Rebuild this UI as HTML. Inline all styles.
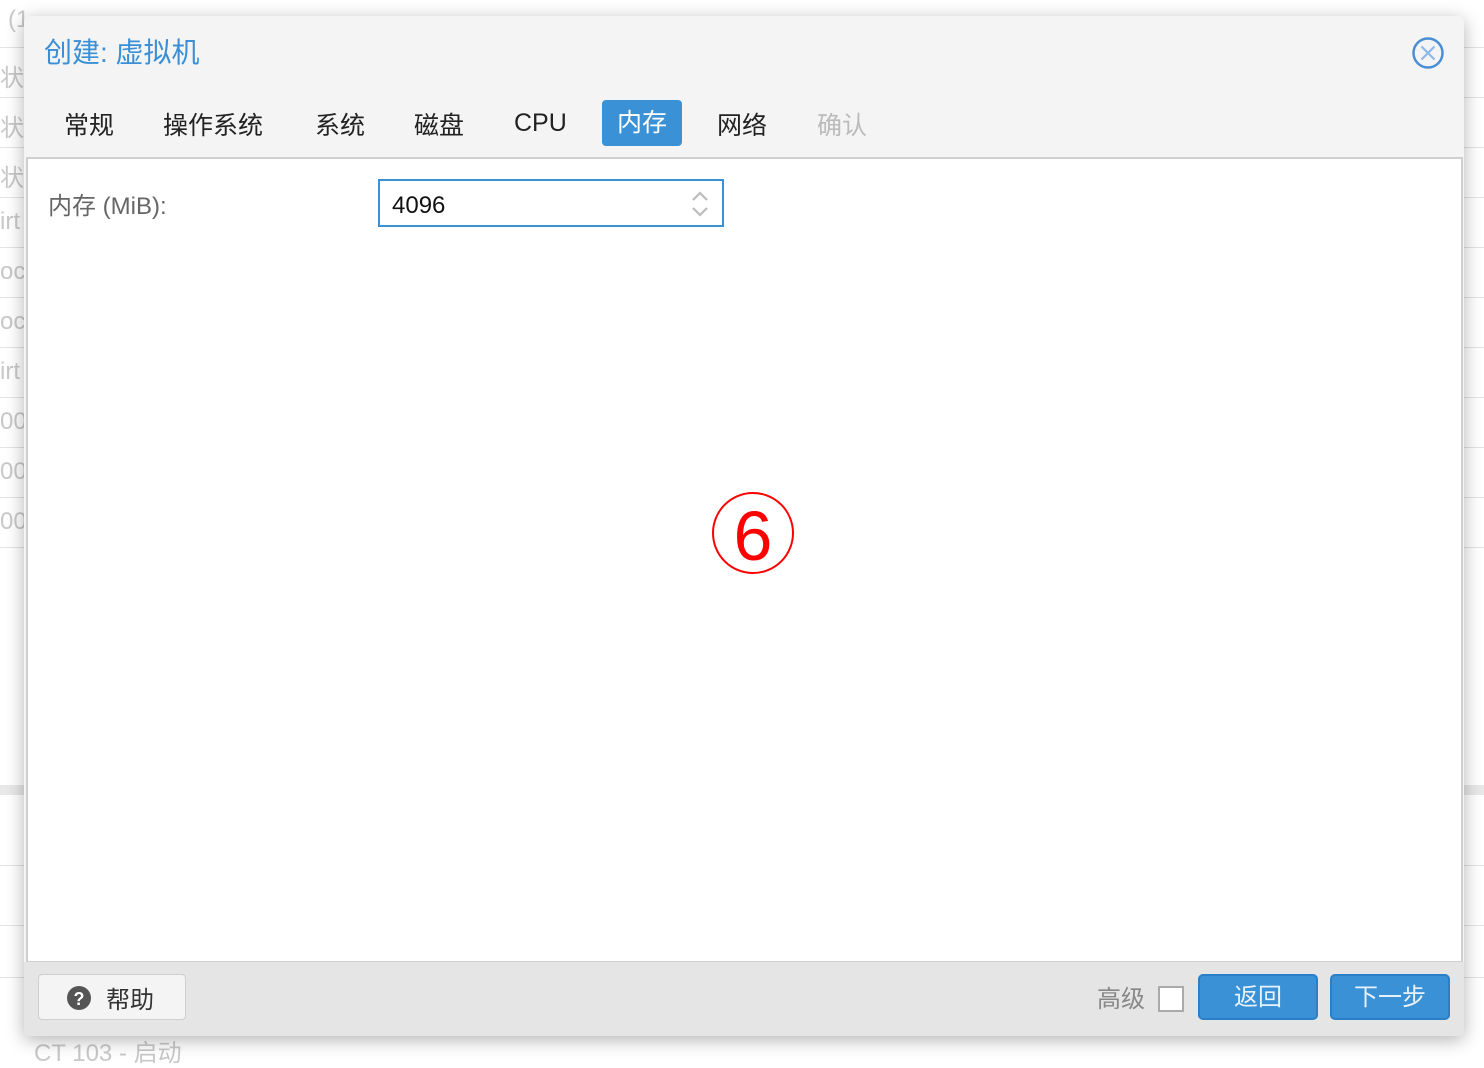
<!DOCTYPE html>
<html><head><meta charset="utf-8"><style>
body{margin:0;width:1484px;height:1058px;background:#fff;position:relative;overflow:hidden;font-family:"Liberation Sans","Noto Sans CJK SC",sans-serif;}
.bgl{position:absolute;left:0;width:1484px;height:1px;background:#e3e3e3}
.bgt{position:absolute;left:0;color:#c8c8c8;font-size:24px}
.dlg{position:absolute;left:24px;top:16px;width:1440px;height:1020px;background:#f4f4f4;border-radius:6px;box-shadow:0 4px 18px rgba(0,0,0,.3);overflow:hidden}
.title{position:absolute;left:20px;top:15px;font-size:28px;color:#3a8fd6}
.tab{position:absolute;top:90px;font-size:25px;color:#222}
.body{position:absolute;left:2px;top:141px;width:1433px;height:802px;background:#fff;border:2px solid #cfcfcf}
.foot{position:absolute;left:0;top:946px;width:1440px;height:74px;background:#e5e5e5}
.btn{position:absolute;top:12px;height:46px;border-radius:5px;background:#3a91d5;border:2px solid #2a80c8;box-sizing:border-box;color:#e8f2fb;font-size:24px;text-align:center;line-height:44px}
</style></head><body>
<div class="bgl" style="top:47px"></div><div class="bgl" style="top:97px"></div><div class="bgl" style="top:147px"></div><div class="bgl" style="top:197px"></div><div class="bgl" style="top:247px"></div><div class="bgl" style="top:297px"></div><div class="bgl" style="top:347px"></div><div class="bgl" style="top:397px"></div><div class="bgl" style="top:447px"></div><div class="bgl" style="top:497px"></div><div class="bgl" style="top:547px"></div>
<div style="position:absolute;left:0;top:785px;width:1484px;height:10px;background:#e8e8e8"></div>
<div class="bgl" style="top:865px"></div><div class="bgl" style="top:925px"></div><div class="bgl" style="top:977px"></div>
<div class="bgt" style="top:1033px;left:34px">CT 103 - 启动</div>
<div class="bgt" style="top:6px;left:8px">(1</div>
<div class="bgt" style="top:58px;left:0">状</div><div class="bgt" style="top:108px;left:0">状</div><div class="bgt" style="top:158px;left:0">状</div><div class="bgt" style="top:208px;left:0">irt</div><div class="bgt" style="top:258px;left:0">oc</div><div class="bgt" style="top:308px;left:0">oc</div><div class="bgt" style="top:358px;left:0">irt</div><div class="bgt" style="top:408px;left:0">00</div><div class="bgt" style="top:458px;left:0">00</div><div class="bgt" style="top:508px;left:0">00</div>
<div class="dlg">
<div class="title">创建: 虚拟机</div>
<svg style="position:absolute;left:1387px;top:20px" width="34" height="34" viewBox="0 0 34 34"><circle cx="17" cy="17" r="14.5" fill="none" stroke="#4a8fd6" stroke-width="2.5"/><path d="M10.5 10.5L23.5 23.5M23.5 10.5L10.5 23.5" stroke="#8fb8ea" stroke-width="2.2"/></svg>
<div class="tab" style="left:40px">常规</div>
<div class="tab" style="left:139px">操作系统</div>
<div class="tab" style="left:291px">系统</div>
<div class="tab" style="left:390px">磁盘</div>
<div class="tab" style="left:490px;top:93px">CPU</div>
<div style="position:absolute;left:578px;top:84px;width:80px;height:46px;background:#3a91d5;border-radius:4px;color:#fff;font-size:25px;text-align:center;line-height:46px">内存</div>
<div class="tab" style="left:693px">网络</div>
<div class="tab" style="left:793px;color:#bbb">确认</div>
<div class="body">
<div style="position:absolute;left:20px;top:27px;font-size:24px;color:#666">内存 (MiB):</div>
<div style="position:absolute;left:350px;top:20px;width:342px;height:44px;border:2px solid #3a91d5;">
<span style="position:absolute;left:12px;top:11px;font-size:24px;color:#111">4096</span>
<svg style="position:absolute;left:310px;top:8px" width="20" height="30"><path d="M3 11L10 4L17 11M3 19L10 26L17 19" fill="none" stroke="#bbb" stroke-width="2.2"/></svg>
</div>
<div style="position:absolute;left:684px;top:333px;width:78px;height:78px;border:2.5px solid #f00;border-radius:50%;color:#f00;font-size:70px;text-align:center;line-height:84px">6</div>
</div>
<div class="foot">
<div style="position:absolute;left:14px;top:12px;width:148px;height:46px;box-sizing:border-box;border:1px solid #cfcfcf;border-radius:4px;background:#f4f4f4">
<svg style="position:absolute;left:27px;top:10px" width="26" height="26"><circle cx="13" cy="13" r="12" fill="#555"/><text x="13" y="20" font-size="18" font-weight="bold" fill="#fff" text-anchor="middle" font-family="Liberation Sans">?</text></svg>
<span style="position:absolute;left:67px;top:5px;font-size:24px;color:#333">帮助</span></div>
<div style="position:absolute;left:1073px;top:17px;font-size:24px;color:#888">高级</div>
<div style="position:absolute;left:1134px;top:24px;width:22px;height:22px;border:2px solid #aaa;background:#fff"></div>
<div class="btn" style="left:1174px;width:120px">返回</div>
<div class="btn" style="left:1306px;width:120px">下一步</div>
</div>
</div>
</body></html>
